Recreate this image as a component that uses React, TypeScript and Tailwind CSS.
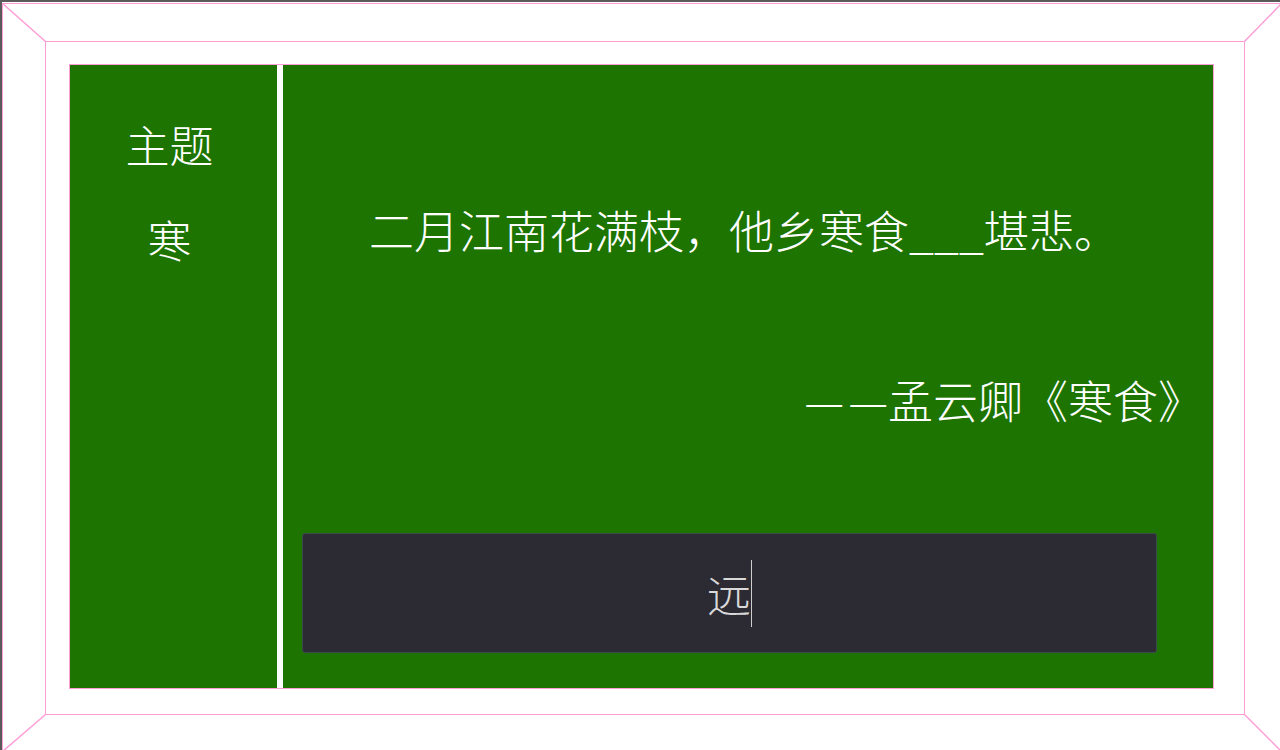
export default function App() {
  return (
    <div
      className="relative w-[1280px] h-[750px] overflow-hidden bg-white border-t-2 border-l-2 border-[#5a5a5a]"
      style={{ fontFamily: '"Noto Sans CJK SC", "Noto Sans", sans-serif' }}
    >
      {/* Outer frame */}
      <div className="relative mt-px w-[1280px] h-[749px] border border-[#ff9ed6] pl-[42px] pt-[37px]">
        <svg
          className="absolute -left-px -top-px pointer-events-none"
          width="1280"
          height="749"
          viewBox="0 0 1280 749"
        >
          <g stroke="#ff9ed6" strokeWidth="1.5" fill="none">
            <line x1="0.5" y1="0.5" x2="43.5" y2="38.5" />
            <line x1="1279.5" y1="0.5" x2="1242.5" y2="38.5" />
            <line x1="0.5" y1="748.5" x2="43.5" y2="711.5" />
            <line x1="1279.5" y1="748.5" x2="1242.5" y2="711.5" />
          </g>
        </svg>

        {/* Inner frame */}
        <div className="relative w-[1200px] h-[674px] border border-[#ff9ed6] pl-[23px] pt-[22px]">
          <div className="flex w-[1145px] h-[625px] border border-[#ff9ed6] bg-white">
            {/* Theme column */}
            <div className="w-[207px] h-full bg-[#1d7400] text-white font-light flex flex-col items-center pt-[49px] pr-[8px]">
              <div className="h-[60px] leading-[60px] text-[44px]">主题</div>
              <div className="mt-[35px] h-[60px] leading-[60px] text-[44px]">寒</div>
            </div>

            {/* Poem column */}
            <div className="ml-[6px] w-[930px] h-full bg-[#1d7400] text-white font-light flex flex-col pt-[135px]">
              <div className="h-[60px] leading-[60px] text-[45px] text-center pr-[8px] whitespace-nowrap">
                二月江南花满枝，他乡寒食___堪悲。
              </div>
              <div className="mt-[110px] h-[60px] leading-[60px] text-[45px] text-right pr-[10px] whitespace-nowrap">
                <span className="tracking-[4px]">—</span>—孟云卿《寒食》
              </div>
              <div className="mt-[103px] ml-[19px] w-[855px] h-[120px] rounded-[3px] border border-[#3b4a4c] bg-[#2c2a33] flex items-center justify-center">
                <span className="text-[44px] leading-[60px] text-[#d9d9d9]">远</span>
                <span className="inline-block w-px h-[67px] bg-[#cfcfcf]" />
              </div>
            </div>
          </div>
        </div>
      </div>
    </div>
  );
}
